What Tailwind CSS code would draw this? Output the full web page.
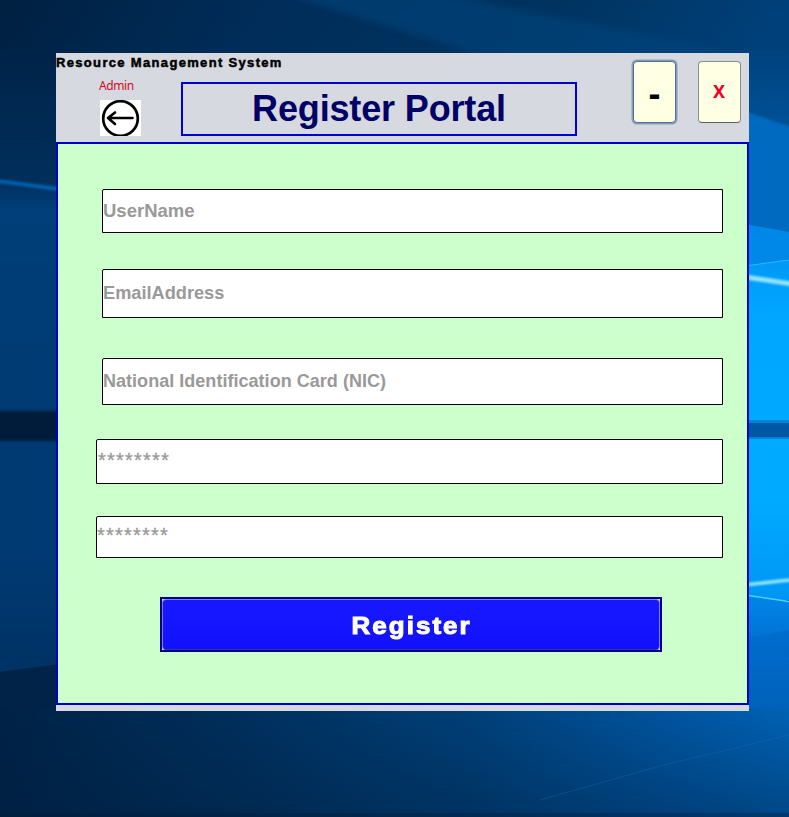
<!DOCTYPE html>
<html lang="en">
<head>
<meta charset="utf-8">
<title>Register Portal</title>
<script src="https://cdn.jsdelivr.net/npm/@tailwindcss/browser@4"></script>
</head>
<body class="relative w-[789px] h-[817px] overflow-hidden bg-[#00305f] pl-[56px] pt-[53px] font-['Liberation_Sans',Arial,sans-serif]">
  <!-- desktop wallpaper -->
  <svg class="absolute inset-0" width="789" height="817" viewBox="0 0 789 817" aria-hidden="true">
    <defs>
      <linearGradient id="top" x1="0" x2="1" y1="0" y2="0.05"><stop offset="0" stop-color="#002041"/><stop offset=".35" stop-color="#002d5a"/><stop offset=".7" stop-color="#00335f"/><stop offset="1" stop-color="#00407a"/></linearGradient>
      <linearGradient id="left" x1="0" x2="0" y1="0" y2="1"><stop offset="0" stop-color="#002348"/><stop offset=".2" stop-color="#002f5c"/><stop offset=".24" stop-color="#003f79"/><stop offset=".55" stop-color="#003a72"/><stop offset=".75" stop-color="#003a73"/><stop offset="1" stop-color="#003060"/></linearGradient>
      <linearGradient id="right" x1="0" x2="0" y1="0" y2="1"><stop offset="0" stop-color="#00427e"/><stop offset=".45" stop-color="#00549b"/><stop offset="1" stop-color="#0068bd"/></linearGradient>
      <linearGradient id="pane" x1="0" x2="0" y1="0" y2="1"><stop offset="0" stop-color="#0098f5"/><stop offset=".15" stop-color="#00a6ff"/><stop offset=".7" stop-color="#00abff"/><stop offset="1" stop-color="#0095f4"/></linearGradient>
      <linearGradient id="low" x1="0" x2="0" y1="0" y2="1"><stop offset="0" stop-color="#0088ea"/><stop offset=".4" stop-color="#0070d2"/><stop offset="1" stop-color="#0060b4"/></linearGradient>
      <linearGradient id="bottom" x1="0" x2="1" y1="0" y2="0"><stop offset="0" stop-color="#002246"/><stop offset=".3" stop-color="#002f5c"/><stop offset=".6" stop-color="#004079"/><stop offset=".85" stop-color="#0055a0"/><stop offset="1" stop-color="#0062b5"/></linearGradient>
      <linearGradient id="shade" x1="0" x2="0" y1="0" y2="1"><stop offset="0" stop-color="#001e3e" stop-opacity="0"/><stop offset="1" stop-color="#001e3e" stop-opacity=".4"/></linearGradient>
      <filter id="s1" filterUnits="userSpaceOnUse" x="-20" y="0" width="830" height="817"><feGaussianBlur stdDeviation=".8"/></filter>
      <filter id="s3" filterUnits="userSpaceOnUse" x="-20" y="-20" width="830" height="850"><feGaussianBlur stdDeviation="3"/></filter>
    </defs>
    <rect width="789" height="60" fill="url(#top)"/>
    <path d="M270 -10H420L800 65H510Z" fill="#004681" opacity=".5" filter="url(#s3)"/>
    <!-- left strip -->
    <rect y="50" width="60" height="660" fill="url(#left)"/>
    <path d="M-10 180L66 190" stroke="#0060ad" stroke-width="4" filter="url(#s1)"/>
    <rect x="-5" y="411" width="70" height="30" fill="#001b3b" filter="url(#s1)"/>
    <!-- right strip -->
    <rect x="745" y="50" width="44" height="200" fill="url(#right)"/>
    <path d="M735 108L800 130V240H735Z" fill="#0069c0" filter="url(#s1)"/>
    <path d="M745 224L789 232V290H745Z" fill="#0088e8"/>
    <path d="M745 266L789 260V600H745Z" fill="url(#pane)"/>
    <path d="M745 266L789 260" stroke="#2bb6ff"/>
    <path d="M735 275.500L799 285" stroke="#8fe4ff" stroke-width="5" filter="url(#s1)"/>
    <rect x="745" y="420" width="44" height="19" fill="#0083d8"/>
    <rect x="745" y="423" width="44" height="14" fill="#0057a3"/>
    <!-- bottom strip -->
    <path d="M745 594L789 601V715H745Z" fill="url(#low)"/>
    <path d="M745 638L789 630V715H745Z" fill="#0064c0" opacity=".4"/>
    <path d="M735 586L799 579" stroke="#8fe6ff" stroke-width="3.500" filter="url(#s1)"/>
    <path d="M745 595L789 601.500" stroke="#4cd2ff" stroke-width="1.500"/>
    <path d="M0 672L60 664V720H0Z" fill="#002347"/>
    <rect y="708" width="789" height="109" fill="url(#bottom)"/>
    <rect y="708" width="789" height="109" fill="url(#shade)"/>
    <path d="M540 800L660 766L789 735" stroke="#1a70b8" stroke-opacity=".35" fill="none"/>
    <rect y="813" width="789" height="4" fill="#001a36" opacity=".3"/>
  </svg>

  <main class="relative flex h-[658px] w-[693px] flex-col bg-[#d6d9df]">
    <header class="flex h-[89px] items-start">
      <div class="w-[125px]">
        <p class="h-[22px] whitespace-nowrap text-[13px] leading-[20px] font-bold tracking-[1.33px] text-black [-webkit-text-stroke:0.5px_#000]">Resource Management System</p>
        <p class="h-[25px] pl-[43px] font-['Noto_Sans',sans-serif] text-[12px] leading-[22px] tracking-[-0.4px] text-[#d20a1e]">Admin</p>
        <button class="ml-[44px] block h-[36px] w-[41px] bg-white" aria-label="Back">
          <svg width="41" height="36" viewBox="0 0 41 36" fill="none" stroke="#000"><circle cx="20.500" cy="18.500" r="17.300" stroke-width="2.700"/><path d="M32.500 18H8M15 12.500L8 18L15 24" stroke-width="2.600" stroke-linecap="round" stroke-linejoin="round"/></svg>
        </button>
      </div>
      <h1 class="mt-[29px] h-[54px] w-[396px] border-2 border-[#0000d0] text-center text-[36px] leading-[49px] font-bold tracking-[-0.150px] text-[#000066]">Register Portal</h1>
      <button class="mt-[8px] ml-[56px] flex h-[62px] w-[43px] items-center justify-center rounded-[4px] border border-[#5c6d80] bg-[#ffffe4] shadow-[0_0_0_1.5px_#7f9fc2]" aria-label="Minimize"><span class="pt-[4px] text-[36px] leading-none font-bold">-</span></button>
      <button class="mt-[8px] ml-[22px] flex h-[62px] w-[43px] items-center justify-center rounded-[4px] border border-[#8b8e8e] border-b-[#5e605c] bg-[#ffffe4] pb-[2px] pr-[1px] font-['Noto_Sans',sans-serif] text-[18px] font-bold text-[#f00028]">X</button>
    </header>

    <form class="flex h-[563px] flex-col items-end border-2 border-[#0000c8] bg-[#ccffcc] pt-[45px] pr-[24px] text-[18px] font-bold text-[#999]">
      <div class="h-[44px] w-[621px] rounded-tl-[2px] border border-black bg-white text-[18.500px] leading-[42px]">UserName</div>
      <div class="mt-[36px] h-[49px] w-[621px] rounded-tl-[2px] border border-black bg-white text-[18.200px] leading-[46px]">EmailAddress</div>
      <div class="mt-[40px] h-[47px] w-[621px] rounded-tl-[2px] border border-black bg-white leading-[44px] tracking-[0.030px]">National Identification Card (NIC)</div>
      <div class="mt-[34px] h-[45px] w-[627px] rounded-tl-[2px] border border-black bg-white pl-px text-[20px] leading-[40px] font-normal tracking-[1.200px] [-webkit-text-stroke:0.3px_#999]">********</div>
      <div class="mt-[32px] h-[42px] w-[627px] rounded-tl-[2px] border border-black bg-white text-[20px] leading-[36px] font-normal tracking-[1.200px] [-webkit-text-stroke:0.3px_#999]">********</div>
      <div class="mt-[39px] mr-[61px] h-[55px] w-[502px] border-2 border-[#000088] bg-[#d5e5ff]">
        <button type="button" class="block h-full w-full rounded-[4px] border border-[#7780ff] border-b-[#333a99] bg-linear-to-b from-[#1818ff] to-[#1010ff] pt-[2px] pl-[2px] text-[24px] leading-none font-bold text-[#ffffe6] [-webkit-text-stroke:1px_#ffffe6]"><span class="inline-block scale-x-[1.08] tracking-[1.900px]">Register</span></button>
      </div>
    </form>
  </main>
</body>
</html>
